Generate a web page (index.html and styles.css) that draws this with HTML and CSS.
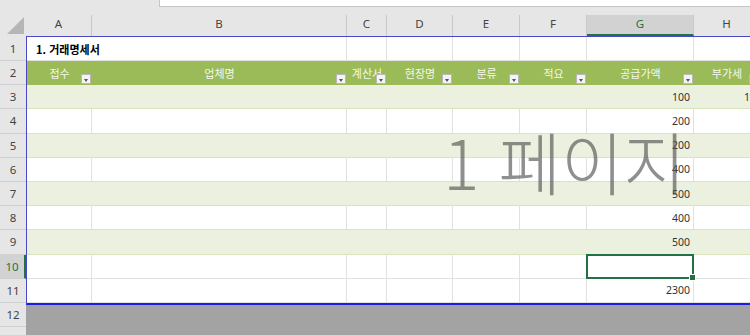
FILE: index.html
```html
<!DOCTYPE html>
<html lang="ko">
<head>
    <meta charset="UTF-8">
    <meta name="viewport" content="width=device-width, initial-scale=1.0">
    <title>거래명세서 - 페이지 나누기 미리 보기</title>
    <link rel="stylesheet" href="styles.css">
</head>
<body>
<div class="topbar"><div class="formula"></div></div>

<div class="colheads">
    <div class="corner">
        <svg width="26" height="21" viewBox="0 0 26 21"><polygon points="24,2 24,19 7,19" fill="#b6b6b6"/></svg>
    </div>
    <div class="ch">A</div>
    <div class="ch">B</div>
    <div class="ch">C</div>
    <div class="ch">D</div>
    <div class="ch">E</div>
    <div class="ch">F</div>
    <div class="ch active">G</div>
    <div class="ch">H</div>
</div>

<div class="main">
    <div class="rowheads">
        <div class="rh first">1</div>
        <div class="rh">2</div>
        <div class="rh">3</div>
        <div class="rh">4</div>
        <div class="rh">5</div>
        <div class="rh">6</div>
        <div class="rh">7</div>
        <div class="rh">8</div>
        <div class="rh">9</div>
        <div class="rh sel">10</div>
        <div class="rh">11</div>
        <div class="rh">12</div>
    </div>

    <div class="sheet">
        <div class="page">
            <!-- 제목 -->
            <div class="row title">
                <div class="cell label">1. 거래명세서</div>
                <div class="cell"></div><div class="cell"></div><div class="cell"></div>
                <div class="cell"></div><div class="cell"></div><div class="cell"></div><div class="cell"></div>
            </div>
            <!-- 표 머리글 -->
            <div class="row head">
                <div class="cell">접수<span class="flt"></span></div>
                <div class="cell">업체명<span class="flt"></span></div>
                <div class="cell">계산서<span class="flt"></span></div>
                <div class="cell">현장명<span class="flt"></span></div>
                <div class="cell">분류<span class="flt"></span></div>
                <div class="cell">적요<span class="flt"></span></div>
                <div class="cell">공급가액<span class="flt"></span></div>
                <div class="cell">부가세<span class="flt"></span></div>
            </div>
            <div class="row band">
                <div class="cell"></div><div class="cell"></div><div class="cell"></div><div class="cell"></div>
                <div class="cell"></div><div class="cell"></div><div class="cell">100</div><div class="cell">10</div>
            </div>
            <div class="row plain">
                <div class="cell"></div><div class="cell"></div><div class="cell"></div><div class="cell"></div>
                <div class="cell"></div><div class="cell"></div><div class="cell">200</div><div class="cell"></div>
            </div>
            <div class="row band">
                <div class="cell"></div><div class="cell"></div><div class="cell"></div><div class="cell"></div>
                <div class="cell"></div><div class="cell"></div><div class="cell">200</div><div class="cell"></div>
            </div>
            <div class="row plain">
                <div class="cell"></div><div class="cell"></div><div class="cell"></div><div class="cell"></div>
                <div class="cell"></div><div class="cell"></div><div class="cell">400</div><div class="cell"></div>
            </div>
            <div class="row band">
                <div class="cell"></div><div class="cell"></div><div class="cell"></div><div class="cell"></div>
                <div class="cell"></div><div class="cell"></div><div class="cell">500</div><div class="cell"></div>
            </div>
            <div class="row plain">
                <div class="cell"></div><div class="cell"></div><div class="cell"></div><div class="cell"></div>
                <div class="cell"></div><div class="cell"></div><div class="cell">400</div><div class="cell"></div>
            </div>
            <div class="row band">
                <div class="cell"></div><div class="cell"></div><div class="cell"></div><div class="cell"></div>
                <div class="cell"></div><div class="cell"></div><div class="cell">500</div><div class="cell"></div>
            </div>
            <div class="row">
                <div class="cell"></div><div class="cell"></div><div class="cell"></div><div class="cell"></div>
                <div class="cell"></div><div class="cell"></div><div class="cell sel"></div><div class="cell"></div>
            </div>
            <div class="row">
                <div class="cell"></div><div class="cell"></div><div class="cell"></div><div class="cell"></div>
                <div class="cell"></div><div class="cell"></div><div class="cell">2300</div><div class="cell"></div>
            </div>
        </div>
        <div class="outside"></div>
    </div>
</div>

<div class="watermark">1 페이지</div>
</body>
</html>
```

FILE: styles.css
```css
* {
    box-sizing: border-box;
}

body {
    margin: 0;
    width: 750px;
    height: 335px;
    overflow: hidden;
    position: relative;
    background-color: #e6e6e6;
    font-family: "Noto Sans", "Noto Sans CJK KR", sans-serif;
}

.topbar {
    height: 7px;
    padding-left: 159px;
}

.formula {
    height: 7px;
    background-color: #fff;
    border-left: 1px solid #c6c6c6;
    border-bottom: 1px solid #c6c6c6;
}

/* column letters */
.colheads {
    display: grid;
    grid-template-columns: 26px 66px 255px 40px 66px 67px 67px 107px 66px;
    height: 29px;
    padding-top: 8px;
}

.corner svg {
    display: block;
}

.ch {
    border-right: 1px solid #c9c9c9;
    text-align: center;
    font-size: 11.5px;
    line-height: 17px;
    color: #444;
}

.ch.active {
    background-color: #d2d2d2;
    color: #217346;
    border-bottom: 2px solid #217346;
}

.main {
    display: flex;
}

/* row numbers */
.rowheads {
    width: 26px;
    flex: none;
}

.rh {
    height: 24.2px;
    border-bottom: 1px solid #d0d0d0;
    display: flex;
    align-items: center;
    justify-content: center;
    font-size: 11.5px;
    color: #444;
}

.rh.first {
    height: 25px;
}

.rh.sel {
    background-color: #d2d2d2;
    color: #217346;
    border-right: 2px solid #217346;
}

.sheet {
    flex: none;
    width: 734px;
}

.page {
    background-color: #fff;
    border-top: 1px solid #4848c4;
    border-left: 1px solid #4848c4;
    border-bottom: 2px solid #1c1ce8;
}

.row {
    display: grid;
    grid-template-columns: 65px 255px 40px 66px 67px 67px 107px 66px;
    height: 24.2px;
}

.row.title {
    height: 24px;
}

.cell {
    position: relative;
    display: flex;
    align-items: center;
    justify-content: flex-end;
    padding-right: 3px;
    border-right: 1px solid #e1e1e1;
    border-bottom: 1px solid #e1e1e1;
    font-size: 10.5px;
    color: #333;
    white-space: nowrap;
}

.cell.label {
    justify-content: flex-start;
    padding-left: 9px;
    border-right-color: transparent;
    font-family: "Noto Sans CJK KR", sans-serif;
    font-weight: bold;
    font-size: 11px;
    color: #000;
}

.row.head {
    background-color: #9bbb59;
}

.row.head .cell {
    justify-content: center;
    padding: 0;
    border: none;
    font-family: "Noto Sans CJK KR", sans-serif;
    font-size: 11px;
    color: #f4f8ec;
}

.row.band {
    background-color: #ebf1de;
}

.row.band .cell {
    border-right-color: transparent;
    border-bottom-color: #d8e4bc;
}

.row.plain .cell {
    border-bottom-color: #d8e4bc;
}

.flt {
    position: absolute;
    right: 1px;
    bottom: 1px;
    width: 10px;
    height: 10px;
    background-color: #f4f4f4;
    border: 1px solid #b8b8b8;
}

.flt::after {
    content: "";
    position: absolute;
    left: 2px;
    top: 4px;
    border-left: 2.5px solid transparent;
    border-right: 2.5px solid transparent;
    border-top: 3px solid #555;
}

.cell.sel::after {
    content: "";
    position: absolute;
    left: -1px;
    top: -1px;
    right: -1px;
    bottom: -1px;
    border: 2px solid #217346;
}

.cell.sel::before {
    content: "";
    position: absolute;
    right: -3px;
    bottom: -3px;
    width: 5px;
    height: 5px;
    background-color: #217346;
    border: 1px solid #fff;
    z-index: 1;
}

.outside {
    height: 40px;
    background-color: #a3a3a3;
}

.watermark {
    position: absolute;
    left: 443px;
    top: 127px;
    font-family: "Noto Sans CJK KR", sans-serif;
    font-weight: 300;
    font-size: 68px;
    line-height: 1;
    color: rgba(85, 85, 85, 0.66);
    white-space: nowrap;
    pointer-events: none;
}
```
